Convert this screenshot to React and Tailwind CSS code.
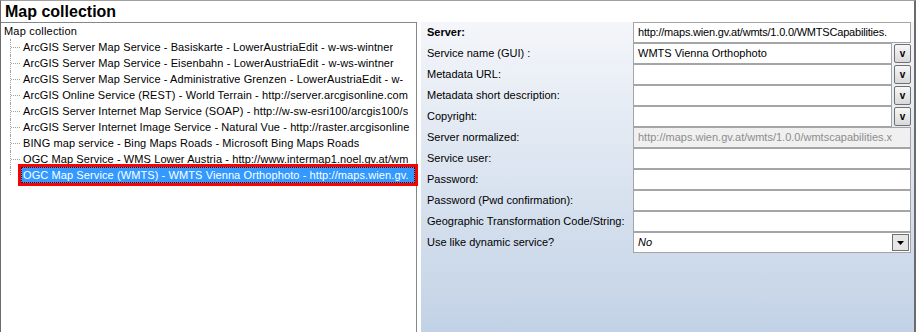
import React from 'react';

const font = { fontFamily: '"Liberation Sans", Arial, sans-serif' };

const treeItems = [
  'ArcGIS Server Map Service - Basiskarte - LowerAustriaEdit - w-ws-wintner',
  'ArcGIS Server Map Service - Eisenbahn - LowerAustriaEdit - w-ws-wintner',
  'ArcGIS Server Map Service - Administrative Grenzen - LowerAustriaEdit - w-',
  'ArcGIS Online Service (REST) - World Terrain - http://server.arcgisonline.com',
  'ArcGIS Server Internet Map Service (SOAP) - http://w-sw-esri100/arcgis100/s',
  'ArcGIS Server Internet Image Service - Natural Vue - http://raster.arcgisonline',
  'BING map service - Bing Maps Roads - Microsoft Bing Maps Roads',
  'OGC Map Service - WMS Lower Austria - http://www.intermap1.noel.gv.at/wm',
];

const selectedItem = 'OGC Map Service (WMTS) - WMTS Vienna Orthophoto - http://maps.wien.gv.';

const fields = [
  { label: 'Server:', bold: true, kind: 'text', value: 'http://maps.wien.gv.at/wmts/1.0.0/WMTSCapabilities.' },
  { label: 'Service name (GUI) :', kind: 'drop', value: 'WMTS Vienna Orthophoto' },
  { label: 'Metadata URL:', kind: 'drop', value: '' },
  { label: 'Metadata short description:', kind: 'drop', value: '' },
  { label: 'Copyright:', kind: 'drop', value: '' },
  { label: 'Server normalized:', kind: 'disabled', value: 'http://maps.wien.gv.at/wmts/1.0.0/wmtscapabilities.x' },
  { label: 'Service user:', kind: 'text', value: '' },
  { label: 'Password:', kind: 'text', value: '' },
  { label: 'Password (Pwd confirmation):', kind: 'text', value: '' },
  { label: 'Geographic Transformation Code/String:', kind: 'text', value: '' },
  { label: 'Use like dynamic service?', kind: 'select', value: 'No' },
];

function DropButton() {
  return (
    <div className="w-[17px] h-[19px] shrink-0 rounded-[2px] border border-[#707070] bg-linear-to-b from-[#f7f7f7] to-[#d9d9d9] flex items-center justify-center text-[10px] font-bold leading-none text-black">
      v
    </div>
  );
}

function Field({ field }) {
  if (field.kind === 'drop') {
    return (
      <div className="flex items-center gap-[2px] w-[278px]">
        <div className="w-[259px] h-[21px] border border-[#a5a5a5] bg-white pl-[4px] flex items-center text-[11px] whitespace-nowrap overflow-hidden">
          {field.value}
        </div>
        <DropButton />
      </div>
    );
  }
  if (field.kind === 'select') {
    return (
      <div className="w-[278px] h-[21px] border border-[#a5a5a5] bg-white pl-[4px] pr-px flex items-center justify-between text-[11px]">
        <span className="italic">{field.value}</span>
        <div className="w-[17px] h-[17px] border border-[#707070] bg-[#e6e6e6] flex items-center justify-center">
          <svg width="7" height="4" viewBox="0 0 7 4">
            <path d="M0 0h7L3.5 4z" fill="#000" />
          </svg>
        </div>
      </div>
    );
  }
  const disabled = field.kind === 'disabled';
  return (
    <div
      className={`w-[278px] h-[21px] border border-[#a5a5a5] pl-[4px] flex items-center text-[11px] whitespace-nowrap overflow-hidden ${
        disabled ? 'bg-[#f0f0f0] text-[#8d8d8d]' : 'bg-white text-black'
      } ${field.bold ? 'tracking-[-0.2px]' : ''}`}
    >
      {field.value}
    </div>
  );
}

function TreeRow({ text }) {
  return (
    <div className="flex h-4 ml-[9px]">
      <div className="w-[10px] shrink-0 border-l border-dotted border-[#a0a0a0] flex items-center">
        <div className="w-[9px] border-t border-dotted border-[#a0a0a0]" />
      </div>
      <div className="min-w-0 pl-[3px] flex items-center text-[11px] tracking-[0.1px] whitespace-nowrap overflow-hidden">
        {text}
      </div>
    </div>
  );
}

export default function App() {
  return (
    <div
      className="w-[916px] h-[332px] bg-white border-t border-[#a0a0a0] border-l border-l-[#6b6b6b] border-r-2 border-r-[#6b6b6b] flex flex-col overflow-hidden text-black"
      style={font}
    >
      <div className="h-[21px] pl-[4px] flex items-center text-[16px] font-bold leading-none">Map collection</div>

      <div className="flex flex-1 min-h-0">
        {/* tree */}
        <div className="w-[416px] shrink-0 border-t border-r border-[#828790] relative">
          <div className="h-4 pl-[3px] flex items-center text-[11px] tracking-[0.2px]">Map collection</div>
          {treeItems.map((t) => (
            <TreeRow key={t} text={t} />
          ))}
          <div className="flex h-4 ml-[9px] relative z-10">
            <div className="w-[8px] shrink-0 h-[8px] border-l border-dotted border-[#a0a0a0]" />
            <div className="-mt-[3px] w-[400px] h-[22px] shrink-0 border-[3px] border-[#ff0000]">
              <div className="h-4 bg-[#3399ff] border border-dotted border-[#1a1a1a] pl-px flex items-center text-[11px] tracking-[0.1px] text-white whitespace-nowrap overflow-hidden">
                {selectedItem}
              </div>
            </div>
          </div>
        </div>

        <div className="w-[4px] shrink-0" />

        {/* properties */}
        <div className="flex-1 bg-linear-to-b from-[#f4f6fa] to-[#c2d2e6] pl-[6px]">
          {fields.map((f) => (
            <div key={f.label} className="flex items-center h-[21px]">
              <div className={`w-[206px] shrink-0 text-[11px] whitespace-nowrap ${f.bold ? 'font-bold' : ''}`}>
                {f.label}
              </div>
              <Field field={f} />
            </div>
          ))}
        </div>
      </div>
    </div>
  );
}
